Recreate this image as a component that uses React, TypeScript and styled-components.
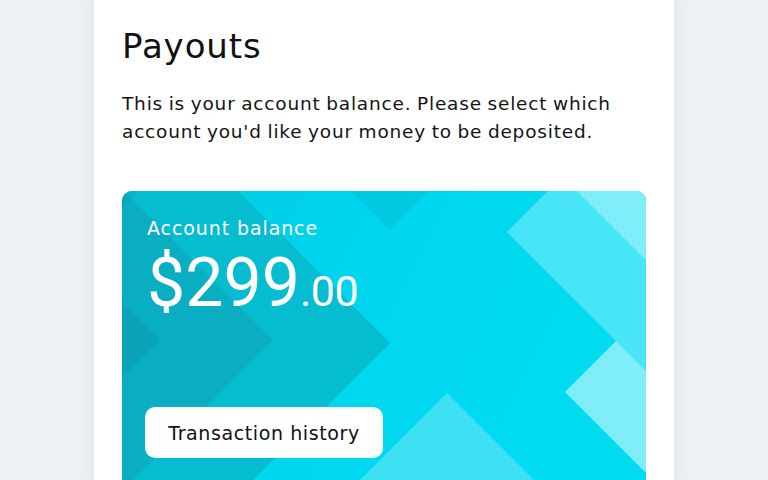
import React, { FC } from 'react'
import styled, { createGlobalStyle } from 'styled-components'

const GlobalStyle = createGlobalStyle`
    html, body {
        margin: 0;
        padding: 0;
        background: #edf0f5;
        font-family: 'DejaVu Sans', 'Open Sans', sans-serif;
        -webkit-font-smoothing: antialiased;
    }
`

const Page = styled.div`
    display: flex;
    height: 480px;
    overflow: hidden;
    padding-left: 94px;
`
const Panel = styled.div`
    width: 580px;
    box-sizing: border-box;
    background: #fff;
    padding: 22px 28px 0 28px;
    box-shadow: 0 0 18px rgba(40, 60, 90, 0.07);
`
const Title = styled.h1`
    margin: 0;
    font-size: 34px;
    line-height: 48px;
    font-weight: 400;
    color: #111;
    letter-spacing: 0.9px;
`
const Description = styled.p`
    margin: 20px 0 0 0;
    font-size: 18.5px;
    line-height: 28px;
    color: #141414;
    letter-spacing: 0.8px;
    word-spacing: -1px;
`
const Card = styled.div`
    position: relative;
    margin-top: 45px;
    height: 310px;
    border-radius: 10px;
    overflow: hidden;
    padding: 22px 25px 0 25px;
    box-sizing: border-box;
`
const Pattern = styled.svg`
    position: absolute;
    inset: 0;
    width: 100%;
    height: 100%;
    z-index: 0;
`
const CardBody = styled.div`
    position: relative;
    z-index: 1;
    display: flex;
    flex-direction: column;
    align-items: flex-start;
`
const Label = styled.span`
    font-size: 19px;
    line-height: 30px;
    color: #fff;
    letter-spacing: 0.9px;
`
const Amount = styled.div`
    display: flex;
    align-items: baseline;
    margin-top: 6px;
    color: #fff;
    font-family: Roboto, 'Liberation Sans', sans-serif;
    font-weight: 400;
    line-height: 68px;
`
const Whole = styled.span`
    font-size: 68px;
    letter-spacing: 0;
`
const Cents = styled.span`
    font-size: 43px;
    letter-spacing: -0.5px;
`
const HistoryButton = styled.button`
    margin-top: 82px;
    margin-left: -2px;
    width: 238px;
    height: 51px;
    border: none;
    border-radius: 10px;
    background: #fff;
    color: #111;
    font-family: 'DejaVu Sans', 'Open Sans', sans-serif;
    font-size: 19px;
    font-weight: 400;
    letter-spacing: 0.6px;
    cursor: pointer;
`

const diamond = (cx: number, cy: number, r: number) =>
    `${cx},${cy - r} ${cx + r},${cy} ${cx},${cy + r} ${cx - r},${cy}`

// chevrons on the card, [centre x, centre y, radius, fill]
const shapes: [number, number, number, string][] = [
    [-52, 152, 320, '#05bcd1'],
    [-169, 149, 320, '#0aaec2'],
    [-282, 149, 320, '#0aa3b8'],
    [-40, -20, 75, 'rgba(0, 70, 95, 0.07)'],
    [268, -41, 80, 'rgba(0, 70, 95, 0.08)'],
    [743, 201, 300, '#80eef9'],
    [585, 41, 200, '#48e4f7'],
    [705, -50, 300, '#80eef9'],
    [325, 312, 110, '#3ee0f3'],
]

const CardPattern: FC = () => (
    <Pattern viewBox="0 0 524 310" preserveAspectRatio="none">
        <defs>
            <linearGradient id="base" x1="0" y1="0" x2="1" y2="0.3">
                <stop offset="0" stopColor="#00c9e0" />
                <stop offset="0.5" stopColor="#00d6ee" />
                <stop offset="1" stopColor="#00ddf3" />
            </linearGradient>
        </defs>
        <rect width="524" height="310" fill="url(#base)" />
        {shapes.map(([cx, cy, r, fill], i) => (
            <polygon key={i} points={diamond(cx, cy, r)} fill={fill} />
        ))}
    </Pattern>
)

const App: FC = () => {
    return (
        <Page>
            <GlobalStyle />
            <Panel>
                <Title>Payouts</Title>
                <Description>
                    This is your account balance. Please select which account you'd like your money to be
                    deposited.
                </Description>
                <Card>
                    <CardPattern />
                    <CardBody>
                        <Label>Account balance</Label>
                        <Amount>
                            <Whole>$299</Whole>
                            <Cents>.00</Cents>
                        </Amount>
                        <HistoryButton>Transaction history</HistoryButton>
                    </CardBody>
                </Card>
            </Panel>
        </Page>
    )
}

export default App
